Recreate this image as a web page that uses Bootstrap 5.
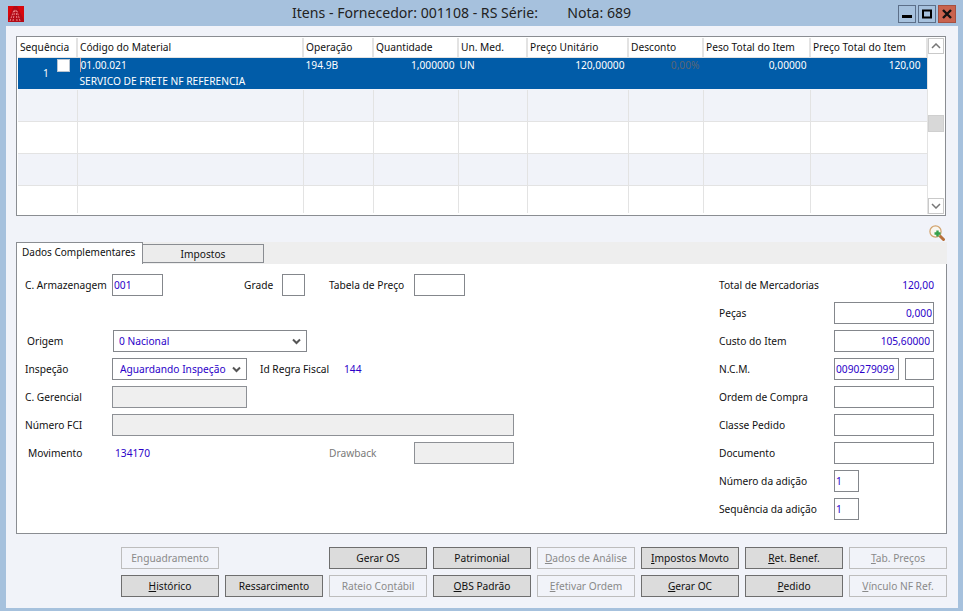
<!DOCTYPE html>
<html lang="pt-BR">
<head>
<meta charset="utf-8">
<title>Itens</title>
<link href="https://cdn.jsdelivr.net/npm/bootstrap@5.3.0/dist/css/bootstrap.min.css" rel="stylesheet">
<style>
html,body{height:611px;overflow:hidden}
body{background:#a6c1dd;font-family:"Noto Sans","Liberation Sans",sans-serif;font-size:10.2px;color:#111;line-height:1.2}
.titlebar{height:26px}
.app-logo{margin-left:8px;margin-top:2px}
.win-title{font-size:14.1px;color:#222;padding-left:268px;line-height:28px;white-space:pre}
.win-ctrls{gap:2px;margin-right:7px;margin-top:2px}
.ctl{width:18px;height:18px;border:1px solid #5c6f89;background:#a6c1dd}
.ctl-close{background:#c9634e;border-color:#a65040}
.content-area{background:#f1f3f9;margin:0 5px 0 6px;height:582px;padding:10px 11px 0 10px}
.grid-box{height:180px;border:1px solid #8a8d92;background:#fff;padding:1px;width:930px}
.grid-main{width:909px}
.data-table{table-layout:fixed;width:909px;margin:0;--bs-table-bg:transparent;font-size:10.2px;color:#111}
.data-table th,.data-table td{padding:0 2px;border:0;border-right:1px solid #e3e3e3;border-bottom:1px solid #e3e3e3;font-weight:400;vertical-align:top;white-space:nowrap;overflow:hidden}
.data-table th{height:19px;padding-top:3px;background:#fff;border-right-width:2px}
.data-table td{height:32px}
.data-table tr.last-row td{height:28px;border-bottom:0}
.data-table tr.tint td{background:#f1f3f9}
.data-table tr.selrow td{background:#015ca8;color:#fff;border-color:#015ca8;border-bottom-color:#f1f3f9;padding-top:1px}
.data-table tr.selrow td.num{padding-right:3px}
.data-table tr.selrow td.num-last{padding-right:6px}
.data-table tr.selrow td.muted-val{color:#5b6673}
.data-table tr.selrow td.un-cell{padding-left:1px}
.seq-cell{position:relative}
.seq-num{position:absolute;left:25px;top:9px}
.seq-check{position:absolute;left:39px;top:1px;width:13px;height:13px;background:#fff;border:1px solid #b9c4d0}
.code-caret{border-left:1px solid #c99}
.line2{margin-top:4px}
.scrollcol{width:18px;background:#fff;border-left:1px solid #e3e3e3}
.scroll-btn{height:16px;border:1px solid #c9c9c9;background:#fff}
.scroll-track{flex:1 1 auto;padding-top:61px}
.scroll-thumb{height:17px;background:#d8d8d8;border:1px solid #cfcfcf}
.zoom-row{height:26px;padding-top:9px;padding-right:2px}
.tabstrip{height:22px;background:#eee;width:931px;margin-bottom:-1px;position:relative}
.tab-on{width:127px;height:22px;background:#fff;border:1px solid #8a8d92;border-bottom:0;padding-top:3px;padding-left:5px;position:relative;z-index:1;font-size:10px;white-space:nowrap}
.tab-off{width:121px;height:19px;margin-top:2px;background:#ececec;border:1px solid #8a8d92;border-left:0;text-align:center;padding-top:3px;font-size:10.2px}
.form-panel{width:931px;height:271px;background:#fff;border:1px solid #8a8d92;padding:10px 12px 0 8px}
.leftside{width:694px}
.rightside{width:215px}
.fld-row{height:22px;margin-bottom:6px}
.lbl-main{width:87px}
.lbl-right{width:115px}
.nudge-a{padding-left:2px}
.nudge-b{padding-left:3px;width:87px}
.field.form-control,.field.form-select{border-radius:0;border:1px solid #84878c;height:22px;min-height:22px;padding:0 1px;font-size:10.2px;color:#2b00c8;background-color:#fff;line-height:20px;box-shadow:none}
.field.form-control:disabled{background:#efefef;border-color:#8d9095}
.field.form-select{padding:0 18px 0 5px;background-position:right 5px center;background-size:9px 7px;background-image:url("data:image/svg+xml,%3csvg xmlns='http://www.w3.org/2000/svg' viewBox='0 0 9 7'%3e%3cpath fill='none' stroke='%23555' stroke-width='2' d='M1 1.5l3.5 3.5L8 1.5'/%3e%3c/svg%3e")}
.field.form-select.w-insp{padding-left:7px}
.w-armaz{width:51px}
.w-grade{width:23px}
.w-tab{width:51px}
.w-orig{width:194px;margin-left:1px}
.w-insp{width:135px}
.w-fci{width:402px}
.w-draw{width:100px}
.w-right{width:100px}
.w-ncm{width:65px}
.w-ncmb{width:29px;margin-left:6px}
.w-adi{width:25px}
.ta-right{text-align:right}
.field.form-control.pad-end{padding-right:3px}
.ml-grade{margin-left:81px;width:38px}
.ml-tab{margin-left:24px;width:85px}
.ml-regra{margin-left:13px;width:84px}
.val-blue{color:#2b00c8}
.mov-val{width:217px;padding-left:3px}
.lbl-dis{color:#7a7a7a;width:85px}
.tot-val{width:100px;text-align:right}
.btn-area{display:grid;grid-template-columns:repeat(8,98px);gap:6px;margin-top:13px;margin-left:105px;width:826px}
.act.btn{height:22px;padding:0;border-radius:0;font-size:10.2px;line-height:20px;background:#dcdcdc;border:1px solid #6e6e6e;color:#111;white-space:nowrap}
.act.btn:disabled{background:transparent;border-color:#bdbdbd;color:#8a8a8a;opacity:1}
.btn-gap{display:block}
</style>
</head>
<body>
<header class="titlebar d-flex align-items-center">
  <svg class="app-logo flex-shrink-0" width="16" height="16" viewBox="0 0 16 16" aria-label="logo">
    <rect width="16" height="16" fill="#d8070d"/>
    <path d="M0 13 6 0h3l7 14v2H2z" fill="#b30a16"/>
    <path d="M2 15 6 4M5 15 7 3M9 15 8 3M12 15 9 5" stroke="#ee8f92" stroke-width=".9" stroke-dasharray="2 1" fill="none"/>
  </svg>
  <div class="win-title flex-grow-1">Itens - Fornecedor: 001108 - RS Série:        Nota: 689</div>
  <div class="win-ctrls d-flex">
    <div class="ctl d-flex align-items-center justify-content-center"><svg width="10" height="10" viewBox="0 0 10 10"><rect x="0" y="6" width="10" height="3" fill="#000"/></svg></div>
    <div class="ctl d-flex align-items-center justify-content-center"><svg width="10" height="10" viewBox="0 0 10 10"><rect x="1" y="1.5" width="8" height="7" fill="none" stroke="#000" stroke-width="2"/></svg></div>
    <div class="ctl ctl-close d-flex align-items-center justify-content-center"><svg width="10" height="10" viewBox="0 0 10 10"><path d="M1 1 9 9M9 1 1 9" stroke="#111" stroke-width="2.4"/></svg></div>
  </div>
</header>

<main class="content-area">
  <div class="grid-box d-flex">
    <div class="grid-main">
      <table class="table data-table">
        <colgroup><col style="width:59px"><col style="width:226px"><col style="width:70px"><col style="width:85px"><col style="width:69px"><col style="width:101px"><col style="width:75px"><col style="width:107px"><col style="width:117px"></colgroup>
        <thead><tr><th>Sequência</th><th>Código do Material</th><th>Operação</th><th>Quantidade</th><th>Un. Med.</th><th>Preço Unitário</th><th>Desconto</th><th>Peso Total do Item</th><th>Preço Total do Item</th></tr></thead>
        <tbody>
          <tr class="selrow">
            <td class="seq-cell"><span class="seq-num">1</span><span class="seq-check"></span></td>
            <td><span class="code-caret">01.00.021</span><div class="line2">SERVICO DE FRETE NF REFERENCIA</div></td>
            <td>194.9B</td><td class="text-end num">1,000000</td><td class="un-cell">UN</td><td class="text-end num">120,00000</td><td class="text-end num muted-val">0,00%</td><td class="text-end num">0,00000</td><td class="text-end num num-last">120,00</td>
          </tr>
          <tr class="tint"><td></td><td></td><td></td><td></td><td></td><td></td><td></td><td></td><td></td></tr>
          <tr><td></td><td></td><td></td><td></td><td></td><td></td><td></td><td></td><td></td></tr>
          <tr class="tint"><td></td><td></td><td></td><td></td><td></td><td></td><td></td><td></td><td></td></tr>
          <tr class="last-row"><td></td><td></td><td></td><td></td><td></td><td></td><td></td><td></td><td></td></tr>
        </tbody>
      </table>
    </div>
    <div class="scrollcol d-flex flex-column">
      <div class="scroll-btn d-flex align-items-center justify-content-center"><svg width="10" height="6" viewBox="0 0 10 6"><path d="M1 5 5 1l4 4" fill="none" stroke="#777" stroke-width="1.5"/></svg></div>
      <div class="scroll-track"><div class="scroll-thumb"></div></div>
      <div class="scroll-btn d-flex align-items-center justify-content-center"><svg width="10" height="6" viewBox="0 0 10 6"><path d="M1 1l4 4 4-4" fill="none" stroke="#777" stroke-width="1.5"/></svg></div>
    </div>
  </div>

  <div class="zoom-row d-flex justify-content-end">
    <svg width="16" height="16" viewBox="0 0 16 16" aria-label="zoom">
      <path d="M11 11l3.5 3.5" stroke="#b8703a" stroke-width="3" stroke-linecap="round"/>
      <circle cx="6.5" cy="6.5" r="5.6" fill="#f8f6ef" stroke="#d2a26c" stroke-width="1.2"/>
      <path d="M8.5 5.5v6M5.5 8.5h6" stroke="#35a04c" stroke-width="2.4"/>
    </svg>
  </div>

  <div class="tabstrip d-flex">
    <div class="tab-on">Dados Complementares</div>
    <div class="tab-off">Impostos</div>
  </div>
  <section class="form-panel d-flex justify-content-between">
    <div class="leftside">
      <div class="fld-row d-flex align-items-center">
        <span class="lbl-main">C. Armazenagem</span><input class="field form-control w-armaz" value="001">
        <span class="ml-grade">Grade</span><input class="field form-control w-grade" value="">
        <span class="ml-tab">Tabela de Preço</span><input class="field form-control w-tab" value="">
      </div>
      <div class="fld-row"></div>
      <div class="fld-row d-flex align-items-center">
        <span class="lbl-main nudge-a">Origem</span>
        <select class="field form-select w-orig"><option>0 Nacional</option></select>
      </div>
      <div class="fld-row d-flex align-items-center">
        <span class="lbl-main">Inspeção</span>
        <select class="field form-select w-insp"><option>Aguardando Inspeção</option></select>
        <span class="ml-regra">Id Regra Fiscal</span><span class="val-blue">144</span>
      </div>
      <div class="fld-row d-flex align-items-center">
        <span class="lbl-main">C. Gerencial</span><input class="field form-control w-insp" disabled>
      </div>
      <div class="fld-row d-flex align-items-center">
        <span class="lbl-main">Número FCI</span><input class="field form-control w-fci" disabled>
      </div>
      <div class="fld-row d-flex align-items-center">
        <span class="nudge-b">Movimento</span><span class="val-blue mov-val">134170</span>
        <span class="lbl-dis">Drawback</span><input class="field form-control w-draw" disabled>
      </div>
    </div>
    <div class="rightside">
      <div class="fld-row d-flex align-items-center"><span class="lbl-right">Total de Mercadorias</span><span class="val-blue tot-val">120,00</span></div>
      <div class="fld-row d-flex align-items-center"><span class="lbl-right">Peças</span><input class="field form-control w-right ta-right" value="0,000"></div>
      <div class="fld-row d-flex align-items-center"><span class="lbl-right">Custo do Item</span><input class="field form-control w-right ta-right pad-end" value="105,60000"></div>
      <div class="fld-row d-flex align-items-center"><span class="lbl-right">N.C.M.</span><input class="field form-control w-ncm" value="0090279099"><input class="field form-control w-ncmb" value=""></div>
      <div class="fld-row d-flex align-items-center"><span class="lbl-right">Ordem de Compra</span><input class="field form-control w-right" value=""></div>
      <div class="fld-row d-flex align-items-center"><span class="lbl-right">Classe Pedido</span><input class="field form-control w-right" value=""></div>
      <div class="fld-row d-flex align-items-center"><span class="lbl-right">Documento</span><input class="field form-control w-right" value=""></div>
      <div class="fld-row d-flex align-items-center"><span class="lbl-right">Número da adição</span><input class="field form-control w-adi" value="1"></div>
      <div class="fld-row d-flex align-items-center"><span class="lbl-right">Sequência da adição</span><input class="field form-control w-adi" value="1"></div>
    </div>
  </section>

  <div class="btn-area">
    <button class="btn act" disabled>Enguadramento</button>
    <span class="btn-gap"></span>
    <button class="btn act">Gerar OS</button>
    <button class="btn act">Patrimonial</button>
    <button class="btn act" disabled><u>D</u>ados de Análise</button>
    <button class="btn act"><u>I</u>mpostos Movto</button>
    <button class="btn act"><u>R</u>et. Benef.</button>
    <button class="btn act" disabled><u>T</u>ab. Preços</button>
    <button class="btn act"><u>H</u>istórico</button>
    <button class="btn act">Ressarcimento</button>
    <button class="btn act" disabled>Rateio Co<u>n</u>tábil</button>
    <button class="btn act"><u>O</u>BS Padrão</button>
    <button class="btn act" disabled><u>E</u>fetivar Ordem</button>
    <button class="btn act"><u>G</u>erar OC</button>
    <button class="btn act"><u>P</u>edido</button>
    <button class="btn act" disabled><u>V</u>ínculo NF Ref.</button>
  </div>
</main>
<script src="https://cdn.jsdelivr.net/npm/bootstrap@5.3.0/dist/js/bootstrap.bundle.min.js"></script>
</body>
</html>
